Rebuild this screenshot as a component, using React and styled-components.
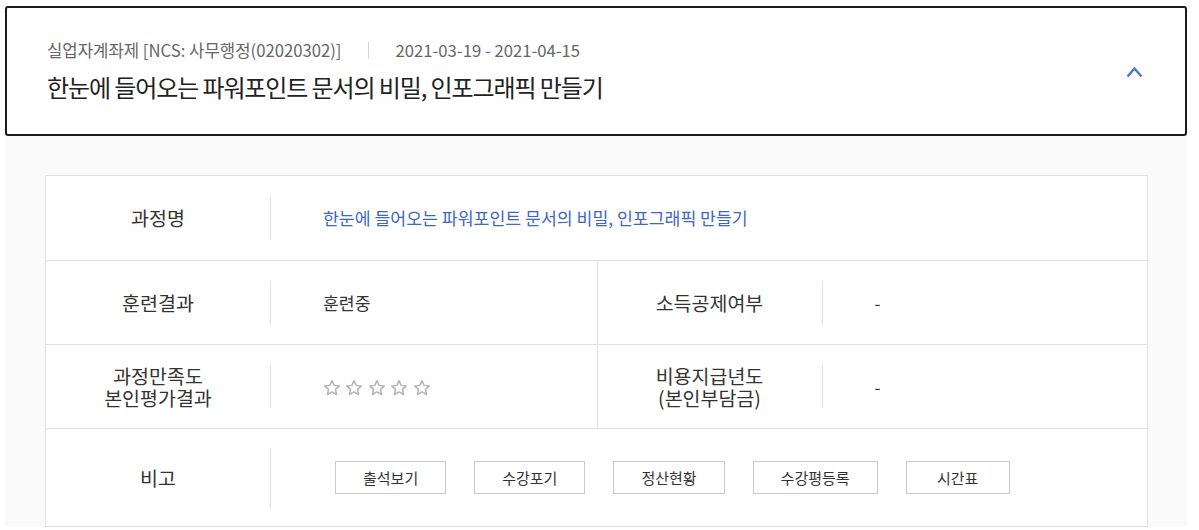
import React from 'react';
import styled, {createGlobalStyle} from 'styled-components';

const GlobalStyle = createGlobalStyle`
    * {
        box-sizing: border-box;
    }
    body {
        margin: 0;
        background: #fff;
        font-family: "Noto Sans CJK KR", "Noto Sans", sans-serif;
        color: #333;
    }
`;

const colors = {
    dark: '#1c1c1c',
    text: '#333',
    grey: '#666',
    line: '#e1e1e1',
    blue: '#3d66c8',
    panel: '#fafafa',
};

const Wrapper = styled.div`
    width: 1182px;
    margin: 6px 0 0 5px;
`;

const Header = styled.div`
    height: 130px;
    border: 2px solid ${colors.dark};
    border-radius: 3px;
    padding: 0 40px;
    display: flex;
    align-items: center;
    justify-content: space-between;
`;

const HeaderText = styled.div`
    display: flex;
    flex-direction: column;
    gap: 8px;
`;

const Meta = styled.div`
    display: flex;
    align-items: center;
    font-size: 16.7px;
    line-height: 24px;
    color: ${colors.grey};
`;

const MetaDivider = styled.span`
    width: 1px;
    height: 17px;
    background: #d4d4d4;
    margin: 0 27px 0 26px;
`;

const Title = styled.h2`
    margin: 0;
    font-size: 24px;
    line-height: 34px;
    font-weight: 400;
    letter-spacing: -1.1px;
    color: #222;
`;

const Toggle = styled.button`
    border: 0;
    padding: 0;
    background: none;
    width: 22px;
    height: 14px;
    display: flex;
    align-items: center;
    justify-content: center;
    cursor: pointer;
    margin-top: 2px;
`;

const Body = styled.div`
    background: ${colors.panel};
    padding: 39px 40px 0 40px;
`;

const Table = styled.div`
    width: 1103px;
    background: #fff;
    border: 1px solid ${colors.line};
`;

const Row = styled.div`
    display: grid;
    grid-template-columns: ${p => p.$split ? '1fr 1fr' : '1fr'};
    height: ${p => p.$height || 84}px;
    border-top: 1px solid ${colors.line};
    &:first-child {
        border-top: 0;
        height: 84px;
    }
`;

const Cell = styled.div`
    display: flex;
    align-items: center;
    & + & {
        border-left: 1px solid ${colors.line};
    }
`;

const Label = styled.div`
    width: 225px;
    flex-shrink: 0;
    height: ${p => p.$tall ? 60 : 43}px;
    border-right: 1px solid ${colors.line};
    display: flex;
    flex-direction: column;
    align-items: center;
    justify-content: center;
    text-align: center;
    font-size: 19.5px;
    line-height: 22px;
    color: ${colors.text};
`;

const Value = styled.div`
    padding-left: 52px;
    font-size: 17.25px;
    line-height: 24px;
    color: ${p => p.$link ? colors.blue : colors.text};
`;

const Stars = styled.div`
    display: flex;
    gap: 4.4px;
    padding-top: 2px;
`;

const Buttons = styled.div`
    display: flex;
    gap: 28px;
    padding-left: 64px;
`;

const Button = styled.button`
    height: 33px;
    min-width: 104px;
    padding: 0 27px;
    background: #fff;
    border: 1px solid #cacaca;
    font-family: inherit;
    font-size: 15px;
    color: ${colors.text};
    cursor: pointer;
`;

const Star = () => (
    <svg width="18" height="18" viewBox="0 0 24 24">
        <path
            d="M12 2.2l2.9 6.3 6.8.7-5.1 4.7 1.5 6.8L12 17.2l-6.1 3.5 1.5-6.8-5.1-4.7 6.8-.7z"
            fill="none"
            stroke="#b5b5b5"
            strokeWidth="2"
            strokeLinejoin="round"
        />
    </svg>
);

const App = () => {
    const title = '한눈에 들어오는 파워포인트 문서의 비밀, 인포그래픽 만들기';
    const actions = ['출석보기', '수강포기', '정산현황', '수강평등록', '시간표'];

    return (
        <Wrapper>
            <GlobalStyle/>
            <Header>
                <HeaderText>
                    <Meta>
                        <span>실업자계좌제 [NCS: 사무행정(02020302)]</span>
                        <MetaDivider/>
                        <span>2021-03-19 - 2021-04-15</span>
                    </Meta>
                    <Title>{title}</Title>
                </HeaderText>
                <Toggle aria-label="접기">
                    <svg width="17" height="12" viewBox="0 0 17 12">
                        <polyline points="1.5,10.5 8.5,2.5 15.5,10.5" fill="none" stroke="#4a74d6" strokeWidth="2.4"/>
                    </svg>
                </Toggle>
            </Header>
            <Body>
                <Table>
                    <Row>
                        <Cell>
                            <Label>과정명</Label>
                            <Value $link>{title}</Value>
                        </Cell>
                    </Row>
                    <Row $split>
                        <Cell>
                            <Label>훈련결과</Label>
                            <Value>훈련중</Value>
                        </Cell>
                        <Cell>
                            <Label>소득공제여부</Label>
                            <Value>-</Value>
                        </Cell>
                    </Row>
                    <Row $split>
                        <Cell>
                            <Label>
                                <span>과정만족도</span>
                                <span>본인평가결과</span>
                            </Label>
                            <Value>
                                <Stars>
                                    {[0, 1, 2, 3, 4].map(i => <Star key={i}/>)}
                                </Stars>
                            </Value>
                        </Cell>
                        <Cell>
                            <Label>
                                <span>비용지급년도</span>
                                <span>(본인부담금)</span>
                            </Label>
                            <Value>-</Value>
                        </Cell>
                    </Row>
                    <Row $height={98}>
                        <Cell>
                            <Label $tall>비고</Label>
                            <Buttons>
                                {actions.map(a => <Button key={a}>{a}</Button>)}
                            </Buttons>
                        </Cell>
                    </Row>
                </Table>
            </Body>
        </Wrapper>
    );
};

export default App;
